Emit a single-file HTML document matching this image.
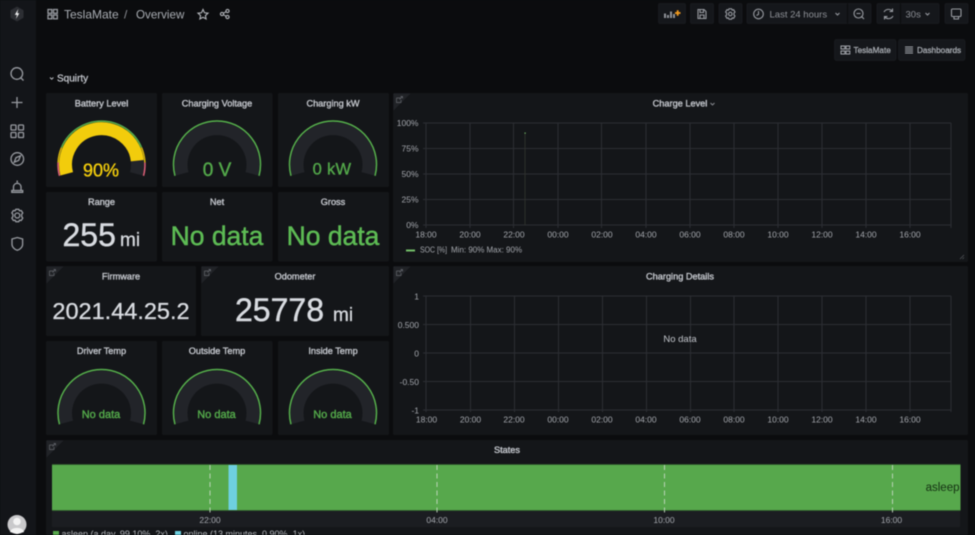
<!DOCTYPE html>
<html><head><meta charset="utf-8"><style>
html,body{margin:0;padding:0;width:975px;height:535px;overflow:hidden;background:#0b0c0e}
svg{display:block;filter:blur(.4px)}
text{font-family:"Liberation Sans",sans-serif}
.t{font-size:9.200px;fill:#c3c6cc;stroke:#c3c6cc;stroke-width:.36;text-anchor:middle}
.a{font-size:8.500px;fill:#a4a7ad}
.l{font-size:8px;fill:#a4a7ad}
.m{text-anchor:middle}
.e{text-anchor:end}
.g{stroke:#2c2e33;stroke-width:1;fill:none}
.i{fill:none;stroke:#989ba1;stroke-width:1.300}
.p{fill:#141619}
.b{fill:#15171b;stroke:#1b1d21;stroke-width:.7}
.big{fill:#d8dbe0;stroke:#d8dbe0;stroke-width:.45}
.nd{fill:#5dbb54;stroke:#5dbb54;stroke-width:.45;font-size:26.500px;text-anchor:middle}
.gd{font-size:11px;fill:#53a84a;stroke:#53a84a;stroke-width:.42;text-anchor:middle}
</style></head><body>
<svg width="975" height="535" viewBox="0 0 975 535" xmlns="http://www.w3.org/2000/svg">
<defs>
<g id="gauge">
<path d="M-34.800 9.300A36 36 0 1 1 34.800 9.300" fill="none" stroke="#222429" stroke-width="13"/>
<path d="M-42 11.300A43.500 43.500 0 1 1 42 11.300" fill="none" stroke="#57b04d" stroke-width="1.500"/>
</g>
<g id="corner"><path d="M0 0H17L0 17Z" fill="#212327"/><path d="M3 4.500H7M3 4.500V9H7.500V6.500M6 6L9 3M7 3H9V5" fill="none" stroke="#65686e" stroke-width=".7"/></g>
</defs>
<rect width="975" height="535" fill="#0b0c0e"/>
<rect width="36" height="535" fill="#131519"/>

<!-- sidebar -->
<path d="M17 6.500L23.500 10.300V17.700L17 21.500L10.500 17.700V10.300Z" fill="#2c2e33"/>
<path d="M18.300 9L14.800 14.900H17L15.900 19L19.300 13.200H17.300Z" fill="#f0f0f1"/>
<g class="i">
<circle cx="16.800" cy="73.500" r="5.800"/><path d="M21 78L23.500 80.500"/>
<path d="M17 97V108M11.500 102.500H22.500"/>
<rect x="11" y="125" width="5" height="5" rx=".8"/><rect x="18.500" y="125" width="5" height="5" rx=".8"/><rect x="11" y="132.500" width="5" height="5" rx=".8"/><rect x="18.500" y="132.500" width="5" height="5" rx=".8"/>
<circle cx="17.300" cy="159" r="6.300"/><path d="M20.500 155.800L18.700 160.400L14.200 162.200L16 157.600Z"/>
<path d="M13.500 190V186.500A3.800 3.800 0 0 1 21 186.500V190M11.800 190.500H22.700V192.300H11.800ZM17.200 180.500V182.500"/>
<circle cx="17.300" cy="215.500" r="2.500"/><path d="M15.800 209.300H18.800L19.500 210.800L21.200 210.500L22.800 213L21.700 214.300V216.700L22.800 218L21.200 220.500L19.500 220.200L18.800 221.700H15.800L15.100 220.200L13.400 220.500L11.800 218L12.900 216.700V214.300L11.800 213L13.400 210.500L15.100 210.800Z" stroke-linejoin="round"/>
<path d="M12 239L17.300 237.500L22.600 239V244.500C22.600 247 20 249.500 17.300 250.300C14.600 249.500 12 247 12 244.500Z"/>
</g>
<circle cx="17" cy="524.500" r="9.500" fill="#c9c9cb"/>
<circle cx="17" cy="521.500" r="3.800" fill="#f3f3f3"/>
<path d="M10 532C11 526.500 23 526.500 24 532L17 534Z" fill="#f3f3f3"/>

<!-- header -->
<g class="i"><rect x="48" y="9.500" width="3.800" height="3.800"/><rect x="53.500" y="9.500" width="3.800" height="3.800"/><rect x="48" y="15" width="3.800" height="3.800"/><rect x="53.500" y="15" width="3.800" height="3.800"/></g>
<text x="64" y="18.500" font-size="12" fill="#a9adb3">TeslaMate</text>
<text x="124" y="18.500" font-size="12" fill="#8e9197">/</text>
<text x="136" y="18.500" font-size="11.600" fill="#a9adb3">Overview</text>
<path d="M203 9.500L204.500 12.800L208 13.200L205.400 15.600L206.100 19L203 17.300L199.900 19L200.600 15.600L198 13.200L201.500 12.800Z" fill="none" stroke="#b4b7bc" stroke-width="1.100"/>
<g fill="none" stroke="#b4b7bc" stroke-width="1.100"><circle cx="227.500" cy="11" r="1.600"/><circle cx="227.500" cy="17" r="1.600"/><circle cx="222" cy="14" r="1.600"/><path d="M223.500 13.200L226 11.800M223.500 14.800L226 16.200"/></g>

<!-- toolbar buttons -->
<rect class="b" x="658.500" y="3.500" width="27" height="20" rx="1.500"/>
<rect class="b" x="690.500" y="3.500" width="23" height="20" rx="1.500"/>
<rect class="b" x="719" y="3.500" width="23" height="20" rx="1.500"/>
<rect class="b" x="747" y="3.500" width="124" height="20" rx="1.500"/>
<path d="M847.500 3.500V23.500" stroke="#0b0c0e"/>
<rect class="b" x="877" y="3.500" width="62" height="20" rx="1.500"/>
<path d="M900.500 3.500V23.500" stroke="#0b0c0e"/>
<rect class="b" x="945" y="3.500" width="23" height="20" rx="1.500"/>
<rect class="b" x="834.500" y="39.500" width="61.500" height="21" rx="2"/>
<rect class="b" x="898.500" y="39.500" width="66.500" height="21" rx="2"/>

<path d="M664 18H666V13.500H664ZM667 18H669V15H667ZM670 18H672V11.500H670ZM673 18H675V14H673Z" fill="#8e9197"/>
<path d="M675 13H680.500M677.700 10.200V15.800" stroke="#f39c1f" stroke-width="1.800"/>
<g class="i" style="stroke-width:1.100">
<path d="M698 9.500H704L706 11.500V18.500H698ZM700 9.500V12.500H703.500V9.500M700 18.500V15H704V18.500"/>
<circle cx="730.300" cy="14" r="1.800"/><path d="M729 8.800H731.600L732.200 10.100L733.700 9.800L735 12L734 13V15L735 16L733.700 18.200L732.200 17.900L731.600 19.200H729L728.400 17.900L726.900 18.200L725.600 16L726.600 15V13L725.600 12L726.900 9.800L728.400 10.100Z"/>
<circle cx="758.500" cy="14" r="4.800"/><path d="M758.500 11V14.300L756.500 15.500"/>
<circle cx="858.500" cy="13.500" r="4.500"/><path d="M861.800 16.800L864 19M856.500 13.500H860.500"/>
<path d="M884 12A5 5 0 0 1 892.500 11.500M892.500 8.500V11.500H889.500M893 16A5 5 0 0 1 884.500 16.500M884.500 19.500V16.500H887.500"/>
<rect x="951.500" y="9" width="9.500" height="7.500" rx="1"/><path d="M954 16.500V19H958.500V16.500"/>
<path d="M835.500 13L837.500 15L839.500 13"/>
<path d="M925.500 13L927.500 15L929.500 13"/>
</g>
<text x="769.500" y="17.500" font-size="9.500" fill="#8e9197">Last 24 hours</text>
<text x="905.500" y="17.500" font-size="9.500" fill="#8e9197">30s</text>
<g class="i" style="stroke-width:1;stroke:#a4a7ad"><rect x="841" y="46" width="3.800" height="3"/><rect x="846" y="46" width="3.800" height="3"/><rect x="841" y="51" width="3.800" height="3"/><rect x="846" y="51" width="3.800" height="3"/></g>
<text x="853.500" y="53" font-size="8.200" stroke="#a9adb3" stroke-width=".28" fill="#a9adb3">TeslaMate</text>
<path d="M905 47H913M905 49H913M905 51H913M905 53H913" stroke="#a4a7ad" stroke-width=".9"/>
<text x="917" y="53" font-size="8.200" stroke="#a9adb3" stroke-width=".28" fill="#a9adb3">Dashboards</text>

<!-- row title -->
<path d="M50 77.500L51.700 79.200L53.400 77.500" fill="none" stroke="#c3c6cc" stroke-width=".9"/>
<text x="57" y="81.500" font-size="10" stroke="#c3c6cc" stroke-width=".28" fill="#c3c6cc">Squirty</text>

<!-- panels -->
<g class="p">
<rect x="46" y="93" width="111" height="94" rx="1.500"/>
<rect x="162" y="93" width="110.500" height="94" rx="1.500"/>
<rect x="278" y="93" width="111" height="94" rx="1.500"/>
<rect x="393" y="93" width="575" height="169" rx="1.500"/>
<rect x="46" y="192" width="111" height="69.500" rx="1.500"/>
<rect x="162" y="192" width="110.500" height="69.500" rx="1.500"/>
<rect x="278" y="192" width="111" height="69.500" rx="1.500"/>
<rect x="46" y="266" width="150" height="70" rx="1.500"/>
<rect x="201" y="266" width="188" height="70" rx="1.500"/>
<rect x="393" y="266" width="575" height="169" rx="1.500"/>
<rect x="46" y="341" width="111" height="94" rx="1.500"/>
<rect x="162" y="341" width="110.500" height="94" rx="1.500"/>
<rect x="278" y="341" width="111" height="94" rx="1.500"/>
<rect x="46" y="440" width="922" height="95" rx="1.500"/>
</g>
<use href="#corner" x="393.500" y="93.500"/>
<use href="#corner" x="46.500" y="266.500"/>
<use href="#corner" x="201.500" y="266.500"/>
<use href="#corner" x="393.500" y="266.500"/>
<use href="#corner" x="46.500" y="440.500"/>

<!-- titles -->
<text class="t" x="101.500" y="106.500">Battery Level</text>
<text class="t" x="217" y="106.500">Charging Voltage</text>
<text class="t" x="333" y="106.500">Charging kW</text>
<text class="t" x="680" y="106.500">Charge Level</text>
<path d="M710.500 103L712.500 105L714.500 103" fill="none" stroke="#8e9197" stroke-width=".9"/>
<text class="t" x="101.500" y="205">Range</text>
<text class="t" x="217" y="205">Net</text>
<text class="t" x="333" y="205">Gross</text>
<text class="t" x="121" y="279.500">Firmware</text>
<text class="t" x="295" y="279.500">Odometer</text>
<text class="t" x="680" y="279.500">Charging Details</text>
<text class="t" x="101.500" y="354">Driver Temp</text>
<text class="t" x="217" y="354">Outside Temp</text>
<text class="t" x="333" y="354">Inside Temp</text>
<text class="t" x="507" y="453">States</text>

<!-- gauges -->
<g transform="translate(101.500 164.500)">
<path d="M-34.800 9.300A36 36 0 1 1 34.800 9.300" fill="none" stroke="#222429" stroke-width="13"/>
<path d="M-34.800 9.300A36 36 0 1 1 35.800 -3.800" fill="none" stroke="#f2cc0c" stroke-width="13"/>
<path d="M-42 11.300A43.500 43.500 0 0 1 -43.400 -2" fill="none" stroke="#e0617a" stroke-width="1.500"/>
<path d="M-43.400 -2A43.500 43.500 0 0 1 -40 -17" fill="none" stroke="#d9b60f" stroke-width="1.500"/>
<path d="M-40 -17A43.500 43.500 0 0 1 40 -17" fill="none" stroke="#57b04d" stroke-width="1.500"/>
<path d="M40 -17A43.500 43.500 0 0 1 43.400 -2" fill="none" stroke="#d9b60f" stroke-width="1.500"/>
<path d="M43.400 -2A43.500 43.500 0 0 1 42 11.300" fill="none" stroke="#e0617a" stroke-width="1.500"/>
</g>
<use href="#gauge" x="217" y="164.500"/>
<use href="#gauge" x="333" y="164.500"/>
<use href="#gauge" x="101.500" y="413"/>
<use href="#gauge" x="217" y="413"/>
<use href="#gauge" x="333" y="413"/>
<text class="m" x="101" y="176.500" font-size="18" fill="#f2cc0c" stroke="#f2cc0c" stroke-width=".35">90%</text>
<text class="m" x="217" y="176" font-size="19" fill="#53a84a" stroke="#53a84a" stroke-width=".4">0 V</text>
<text class="m" x="332" y="174.500" font-size="16.500" fill="#53a84a" stroke="#53a84a" stroke-width=".35" letter-spacing=".3">0 kW</text>
<text class="gd" x="101" y="418">No data</text>
<text class="gd" x="216.500" y="418">No data</text>
<text class="gd" x="332.500" y="418">No data</text>

<!-- stats -->
<text class="big" x="62.500" y="246" font-size="32">255</text>
<text class="big" x="120" y="246" font-size="19" style="stroke-width:.3">mi</text>
<text class="nd" x="217" y="245">No data</text>
<text class="nd" x="333" y="245">No data</text>
<text class="big" x="121" y="319" font-size="23.500" text-anchor="middle" style="stroke-width:.3">2021.44.25.2</text>
<text class="big" x="235" y="321" font-size="32">25778</text>
<text class="big" x="333" y="321" font-size="19" style="stroke-width:.3">mi</text>

<!-- chart 1 -->
<path class="g" d="M423 123H951M423 148.500H951M423 174H951M423 199.500H951M423 225H951"/>
<path class="g" d="M426 123V228M470 123V228M513.500 123V228M558 123V228M601.500 123V228M646 123V228M690 123V228M734 123V228M778 123V228M822 123V228M866 123V228M910 123V228M951 123V228"/>
<path d="M525 133V225" stroke="#33362f" stroke-width=".8"/>
<rect x="524.500" y="132.500" width="1.200" height="1.200" fill="#73bf69"/>
<g class="a e">
<text x="418.500" y="126">100%</text><text x="418.500" y="151.500">75%</text><text x="418.500" y="177">50%</text><text x="418.500" y="202.500">25%</text><text x="418.500" y="228">0%</text>
</g>
<g class="a m">
<text x="426" y="237.500">18:00</text><text x="470" y="237.500">20:00</text><text x="514" y="237.500">22:00</text><text x="558" y="237.500">00:00</text><text x="602" y="237.500">02:00</text><text x="646" y="237.500">04:00</text><text x="690" y="237.500">06:00</text><text x="734" y="237.500">08:00</text><text x="778" y="237.500">10:00</text><text x="822" y="237.500">12:00</text><text x="866" y="237.500">14:00</text><text x="910" y="237.500">16:00</text>
</g>
<rect x="406" y="249.500" width="9" height="2" fill="#73bf69"/>
<text class="l" x="420" y="252.500" textLength="27" lengthAdjust="spacingAndGlyphs">SOC [%]</text><text class="l" x="451" y="252.500">Min: 90%</text><text class="l" x="486.500" y="252.500">Max: 90%</text>
<path d="M960 259L964 255M962.500 259L964 257.500" stroke="#55585d" stroke-width=".7"/>

<!-- chart 2 -->
<path class="g" d="M423 296H951M423 324.500H951M423 353H951M423 381.500H951M423 410H951"/>
<path class="g" d="M426 296V412M470.500 296V412M514.500 296V412M558.500 296V412M602.500 296V412M646.500 296V412M690.500 296V412M734 296V412M778 296V412M822 296V412M866 296V412M910 296V412M951 296V412"/>
<g class="a e">
<text x="419" y="299.500">1</text><text x="419" y="328">0.500</text><text x="419" y="356.500">0</text><text x="419" y="385">-0.50</text><text x="419" y="413.500">-1</text>
</g>
<g class="a m">
<text x="426.500" y="422.500">18:00</text><text x="470.500" y="422.500">20:00</text><text x="514" y="422.500">22:00</text><text x="558" y="422.500">00:00</text><text x="602" y="422.500">02:00</text><text x="646" y="422.500">04:00</text><text x="690" y="422.500">06:00</text><text x="734" y="422.500">08:00</text><text x="778" y="422.500">10:00</text><text x="822" y="422.500">12:00</text><text x="866" y="422.500">14:00</text><text x="910" y="422.500">16:00</text>
</g>
<text class="m" x="680" y="342" font-size="9.500" fill="#c3c6cc">No data</text>

<!-- states -->
<rect x="52" y="510" width="908" height="17" fill="#1b1d21"/>
<rect x="52" y="464.500" width="908.500" height="46" fill="#57a84c"/>
<path d="M52 464.500H960.500M52 510.500H960.500" stroke="#2f5a2b" stroke-width=".7"/>
<rect x="228.500" y="465" width="8.500" height="45" fill="#6ed0e0"/>
<path d="M210 465V513M437 465V513M664.500 465V513M892.500 465V513" stroke="#c5d8c2" stroke-width=".9" stroke-dasharray="5 3.500" fill="none"/>
<text class="e" x="959.500" y="491" font-size="11.500" fill="#143012">asleep</text>
<g class="a m">
<text x="210" y="523">22:00</text><text x="437" y="523">04:00</text><text x="664" y="523">10:00</text><text x="891.500" y="523">16:00</text>
</g>
<rect x="53" y="531" width="6" height="6" fill="#57a84c"/>
<text x="61.500" y="537" font-size="9" fill="#b4b7bc">asleep (a day, 99.10%, 2x)</text>
<rect x="175" y="531" width="6" height="6" fill="#6ed0e0"/>
<text x="183.500" y="537" font-size="9" fill="#b4b7bc">online (13 minutes, 0.90%, 1x)</text>
</svg>
</body></html>
